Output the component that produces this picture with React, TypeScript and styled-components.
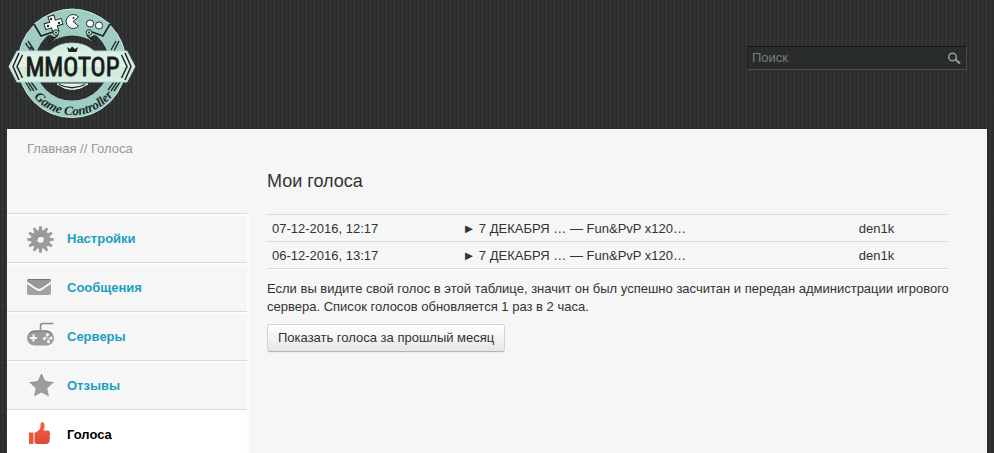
import React from "react";
import styled, { createGlobalStyle, css } from "styled-components";

const Global = createGlobalStyle`
  *, *::before, *::after { box-sizing: border-box; }
  html { min-height: 100%; }
  body {
    margin: 0;
    font: 13px/18px "Liberation Sans", Arial, sans-serif;
    color: #333;
    background-color: #303131;
    background-image:
      repeating-linear-gradient(0deg, rgba(0, 0, 0, 0.04) 0 1px, transparent 1px 4px, rgba(255, 255, 255, 0.01) 4px 5px, transparent 5px 7px),
      repeating-linear-gradient(90deg, rgba(0, 0, 0, 0.13) 0 1px, transparent 1px 2px, rgba(255, 255, 255, 0.02) 2px 3px, rgba(0, 0, 0, 0.07) 3px 4px);
  }
`;

const Page = styled.div`
  display: flex;
  flex-direction: column;
  min-height: 100vh;
  padding: 0 7px;
`;

const Header = styled.header`
  display: flex;
  justify-content: space-between;
  align-items: flex-start;
  height: 129px;
  padding: 8px 20px 0 0;
`;

const LogoLink = styled.a`
  display: block;
  svg { display: block; }
`;

const Search = styled.form`
  display: flex;
  align-items: center;
  width: 220px;
  height: 24px;
  margin-top: 38px;
  padding: 0 5px 0 4px;
  background: rgba(40, 43, 42, 0.85);
  border: 1px solid;
  border-color: #161818 #484a4a #4c4e4e #1c1e1e;
`;

const SearchInput = styled.input`
  flex: 1;
  min-width: 0;
  padding: 0;
  border: 0;
  outline: 0;
  background: none;
  color: #ccc;
  font: inherit;
  &::placeholder { color: #7d7f7f; opacity: 1; }
`;

const SearchButton = styled.button`
  display: flex;
  padding: 0;
  border: 0;
  background: none;
  cursor: pointer;
`;

const Panel = styled.div`
  display: flex;
  flex: 1;
  flex-direction: column;
  background: #f6f6f6;
`;

const Breadcrumbs = styled.nav`
  padding: 11px 20px 0;
  color: #999;
  a { color: inherit; text-decoration: none; }
`;

const Columns = styled.div`
  display: flex;
  flex: 1;
  align-items: stretch;
`;

const Sidebar = styled.nav`
  flex: none;
  width: 242px;
  padding-top: 55px;
`;

const Menu = styled.ul`
  margin: 0;
  padding: 0;
  list-style: none;
  border-right: 2px solid #fbfbfb;
`;

const activeItem = css`
  color: #000;
  background: #fff;
`;

const MenuLink = styled.a<{ $active?: boolean }>`
  display: flex;
  align-items: center;
  height: 49px;
  padding: 2px 20px 0;
  border-top: 1px solid #d9d9d9;
  box-shadow: inset 0 2px #fcfcfc;
  color: #1b9fc0;
  font-weight: bold;
  text-decoration: none;
  ${(p) => p.$active && activeItem}
`;

const IconCell = styled.span`
  display: flex;
  flex: none;
  width: 40px;
  svg { display: block; }
`;

const Main = styled.main`
  flex: 1;
  min-width: 0;
  padding: 11px 20px 20px 18px;
`;

const Title = styled.h1`
  margin: 0 0 21px;
  font-size: 18px;
  font-weight: normal;
  line-height: 24px;
`;

const TableArea = styled.div`
  padding-right: 20px;
`;

const Votes = styled.table`
  width: 100%;
  border-collapse: collapse;
  table-layout: fixed;
  border-bottom: 1px solid #d9d9d9;
  box-shadow: 0 2px #fcfcfc;
`;

const Cell = styled.td<{ $width?: string }>`
  width: ${(p) => p.$width ?? "auto"};
  height: 27px;
  padding: 2px 5px 0;
  border-top: 1px solid #d9d9d9;
  white-space: nowrap;
`;

const LastCell = styled(Cell)`
  padding-left: 7px;
`;

const Note = styled.p`
  margin: 11px 0 8px;
`;

const Button = styled.button`
  height: 28px;
  padding: 0 10px;
  border: 1px solid #d2d2d2;
  border-bottom-color: #b4b4b4;
  border-radius: 3px;
  background: linear-gradient(#fff, #e6e6e6);
  box-shadow: 0 1px 1px rgba(0, 0, 0, 0.05);
  color: #333;
  font: inherit;
  cursor: pointer;
`;

const Logo = () => (
  <svg width="130" height="112" viewBox="7 8 130 112" role="img" aria-label="MMOTOP Game Controller">
    <defs>
      <linearGradient id="band" x1="0" y1="0" x2="0" y2="1">
        <stop offset="0" stopColor="#d3ebe1" />
        <stop offset=".6" stopColor="#e3f4e9" />
        <stop offset=".62" stopColor="#cfe9da" />
        <stop offset="1" stopColor="#d9f0e3" />
      </linearGradient>
      <path id="scriptLine" d="M34 97A50.500 50.500 0 0 0 117 89" />
    </defs>
    <circle cx="72" cy="63.500" r="45.500" fill="none" stroke="#9fcdc4" strokeWidth="17" />
    <circle cx="72" cy="63.500" r="54" fill="none" stroke="#c5e4dc" />
    <path d="M34 24Q72-6 110 24L104 36L94 35L89 38L94 42Q72 29 50 42L56 38L51 35L40 36Z" fill="#9fcdc4" />
    <path d="M34 24Q72-6 110 24" fill="none" stroke="#c5e4dc" />
    <path d="M34 24L41 36L53 32M110 24L103 36L92 32M49 42Q56 37 58 35M95 42Q88 37 87 35" fill="none" stroke="#1d2322" strokeWidth="1.600" />
    <path d="M25.500 43L31 51M28 41L34 50M30 47L34 51M114 51L119 41M111 50L116 41M25.500 82L31 91M28 82L34 91M31 82L37 90M108 90L114 82M111 91L117 82M114 91L120 82" fill="none" stroke="#26302f" strokeWidth="1.400" />
    <g fill="#f8fbf9" stroke="#26302f" strokeWidth="1">
      <path transform="rotate(-18 53.500 24)" d="M50.500 15.500h6v5.500h6v6h-6v5.500h-6v-5.500h-6v-6h6Z" />
      <path d="M73 21.500L78.500 17A7 7 0 1 0 78.500 26Z" />
      <circle cx="90" cy="23.500" r="3.600" />
      <circle cx="99" cy="25.500" r="3.600" />
      <circle cx="56" cy="32.500" r="2.800" fill="#b8dcd4" />
      <circle cx="89" cy="32.500" r="2.800" fill="#b8dcd4" />
    </g>
    <g fill="#26302f">
      <circle cx="51" cy="19" r="1.200" /><circle cx="59" cy="23" r="1.200" />
      <circle cx="48" cy="26" r="1.200" /><circle cx="73.500" cy="18" r="1" />
      <circle cx="56" cy="32.500" r="1" /><circle cx="89" cy="32.500" r="1" />
    </g>
    <path d="M57 84Q72 95 88 84Z" fill="#e2f3ea" stroke="#e2f3ea" />
    <path d="M59 84.500Q72 91 85 84.500" fill="none" stroke="#1d2322" strokeWidth="1.300" />
    <path d="M17 51H50Q59 43 72 43Q85 43 94 51H127L135 66.500L127 82H17L9 66.500Z" fill="url(#band)" stroke="#b5d6cb" />
    <path d="M19 53L13 66.500L19 80M22.500 55L17 66.500L22.500 78M125 53L131 66.500L125 80M121.500 55L127 66.500L121.500 78" fill="none" stroke="#1d2322" strokeWidth="1.500" />
    <path d="M67 47L70 49L72 46.500L75 49L78 47L76.500 52H68.500Z" fill="#1d2322" />
    <text x="72.500" y="76" textAnchor="middle" fontFamily="'Liberation Sans Narrow', 'Roboto Condensed', 'Liberation Sans', sans-serif" fontSize="25" fill="#171c1b" stroke="#171c1b" strokeWidth=".8">MMOTOP</text>
    <text fontFamily="'Liberation Serif', serif" fontStyle="italic" fontWeight="bold" fontSize="13" fill="#1d2625">
      <textPath href="#scriptLine">Game Controller</textPath>
    </text>
  </svg>
);

const teeth = Array.from({ length: 12 }, (_, i) => (i * 360) / 12);

const GearIcon = () => (
  <svg width="27" height="27" viewBox="0 0 27 27" aria-hidden="true" fill="#9b9b9b">
    {teeth.map((a) => (
      <path key={a} d="M12.200 .3h2.600l.5 4.700h-3.600Z" transform={`rotate(${a} 13.500 13.500)`} />
    ))}
    <circle cx="13.500" cy="13.500" r="6.500" fill="none" stroke="#9b9b9b" strokeWidth="6.400" />
    <path d="M10 13.500A3.500 3.500 0 0 1 15.500 10.600" fill="none" stroke="#6d6d6d" />
  </svg>
);

const MailIcon = () => (
  <svg width="25" height="19" viewBox="0 0 25 19" aria-hidden="true">
    <path d="M1.500 0H22.500Q24 0 24 1.500V2.500L14.500 9Q12 10.500 9.500 9L0 2.500V1.500Q0 0 1.500 0Z" fill="#989898" />
    <path d="M0 5L9 11Q12 13 15 11L24 5V14Q24 16 22 16H2Q0 16 0 14Z" fill="#a1a1a1" />
    <path d="M1 .5H23" stroke="#757575" />
  </svg>
);

const PadIcon = () => (
  <svg width="28" height="30" viewBox="0 0 28 30" aria-hidden="true">
    <path d="M13.500 8V4Q13.500 1.500 16 1.500H26.500" fill="none" stroke="#8b8b8b" strokeWidth="1.600" />
    <rect x="0" y="8.500" width="27" height="15" rx="7.500" fill="#9c9c9c" />
    <path d="M2 12Q4 9 8 9H19Q23 9 25 12" fill="none" stroke="#727272" />
    <path d="M6.500 12.500v7M3 16h7" stroke="#f6f6f6" strokeWidth="2" />
    <g fill="#f6f6f6">
      <circle cx="20.500" cy="12.700" r="1.600" /><circle cx="24" cy="16" r="1.600" />
      <circle cx="17.500" cy="16.500" r="1.600" /><circle cx="21.500" cy="19.700" r="1.600" />
    </g>
    <path d="M18.500 14L22.500 18" stroke="#f6f6f6" />
  </svg>
);

const StarIcon = () => (
  <svg width="28" height="26" viewBox="0 0 28 26" aria-hidden="true">
    <path d="M14.500 1L18 8.600L26.500 9.600L20.300 15.200L22 23.500L14.500 19.600L7 23.500L8.700 15.200L2.500 9.600L11 8.600Z" fill="#9d9d9d" />
    <path d="M2.500 9.600L11 8.600L14.500 1L18 8.600L26.500 9.600" fill="none" stroke="#858585" strokeWidth=".8" />
  </svg>
);

const ThumbIcon = () => (
  <svg width="24" height="28" viewBox="0 0 24 28" aria-hidden="true">
    <defs>
      <linearGradient id="thumb" x1="0" y1="0" x2="0" y2="1">
        <stop offset="0" stopColor="#f4664b" /><stop offset="1" stopColor="#de4830" />
      </linearGradient>
    </defs>
    <path d="M2 11.500H6.500V23H2Z" fill="#e9563c" />
    <path d="M7.500 12L11.500 9.500Q14 7 13.500 3Q13.500 1 15.500 1Q18 2 17.500 6L16.500 9.500H21Q23 9.700 23 12L22.500 20Q22 23 19 23H10L7.500 22Z" fill="url(#thumb)" />
    <path d="M19.500 13.500H23M19.500 17H23M19.500 20H22.500" stroke="#d94931" strokeWidth=".7" />
  </svg>
);

const menu = [
  { label: "Настройки", Icon: GearIcon },
  { label: "Сообщения", Icon: MailIcon },
  { label: "Серверы", Icon: PadIcon },
  { label: "Отзывы", Icon: StarIcon },
  { label: "Голоса", Icon: ThumbIcon, active: true },
];

const votes = ["07-12-2016, 12:17", "06-12-2016, 13:17"];

export default function App() {
  return (
    <>
      <Global />
      <Page>
        <Header>
          <LogoLink href="#"><Logo /></LogoLink>
          <Search role="search" onSubmit={(e) => e.preventDefault()}>
            <SearchInput type="text" placeholder="Поиск" aria-label="Поиск" />
            <SearchButton type="submit" aria-label="Найти">
              <svg width="14" height="13" viewBox="0 0 14 13" aria-hidden="true" fill="none" stroke="#959b9f">
                <circle cx="5.500" cy="5" r="3.800" strokeWidth="1.500" />
                <path d="M8.500 7.500L13 11.500" strokeWidth="2.200" />
              </svg>
            </SearchButton>
          </Search>
        </Header>
        <Panel>
          <Breadcrumbs><a href="#">Главная</a> // Голоса</Breadcrumbs>
          <Columns>
            <Sidebar>
              <Menu>
                {menu.map(({ label, Icon, active }) => (
                  <li key={label}>
                    <MenuLink href="#" $active={active} aria-current={active ? "page" : undefined}>
                      <IconCell><Icon /></IconCell>
                      {label}
                    </MenuLink>
                  </li>
                ))}
              </Menu>
            </Sidebar>
            <Main>
              <Title>Мои голоса</Title>
              <TableArea>
                <Votes>
                  <tbody>
                    {votes.map((date) => (
                      <tr key={date}>
                        <Cell $width="28%">{date}</Cell>
                        <Cell>► 7 ДЕКАБРЯ … — Fun&amp;PvP x120…</Cell>
                        <LastCell $width="14%">den1k</LastCell>
                      </tr>
                    ))}
                  </tbody>
                </Votes>
              </TableArea>
              <Note>
                Если вы видите свой голос в этой таблице, значит он был успешно засчитан и передан администрации игрового сервера. Список голосов обновляется 1 раз в 2 часа.
              </Note>
              <Button type="button">Показать голоса за прошлый месяц</Button>
            </Main>
          </Columns>
        </Panel>
      </Page>
    </>
  );
}
